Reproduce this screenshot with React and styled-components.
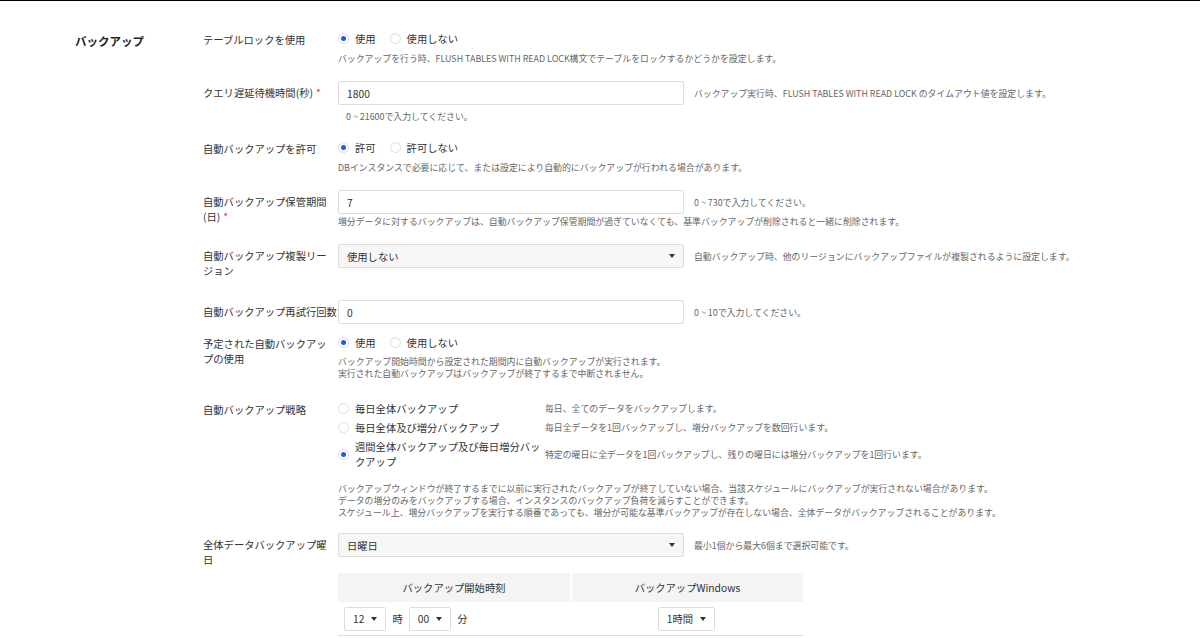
import React from 'react';
import styled, { createGlobalStyle } from 'styled-components';

const Global = createGlobalStyle`
  html, body { margin: 0; background: #fff; }
  body { font-family: "Noto Sans CJK JP", "Noto Sans", sans-serif; color: #333; border-top: 1px solid #000; }
  * { box-sizing: border-box; }
`;

const Page = styled.div`
  display: flex;
  padding: 30px 0 0 75px;
  height: 637px;
  overflow: hidden;
`;

const Title = styled.div`
  width: 128px;
  font-size: 11.5px;
  font-weight: 700;
  color: #222;
  padding-top: 2px;
`;

const Form = styled.div`
  display: flex;
  flex-direction: column;
`;

const Row = styled.div`
  display: flex;
  margin-bottom: ${({ mb }) => mb ?? 16}px;
`;

const Label = styled.div`
  width: 135px;
  font-size: 10.3px;
  line-height: 15px;
  color: #333;
  padding-top: ${({ pt }) => pt ?? 1}px;
  padding-right: 4px;
`;

const NoWrap = styled.span`
  white-space: nowrap;
`;

const Req = styled.span`
  color: #e53935;
  margin-left: 3px;
`;

const Body = styled.div`
  display: flex;
  flex-direction: column;
`;

const Line = styled.div`
  display: flex;
  align-items: ${({ top }) => (top ? 'flex-start' : 'center')};
`;

const Help = styled.div`
  font-size: 8.9px;
  line-height: 12px;
  color: #666;
  margin-top: ${({ mt }) => mt ?? 7}px;
  padding-left: ${({ pl }) => pl ?? 0}px;
`;

const Side = styled.div`
  font-size: 8.9px;
  color: #666;
  margin-left: 10px;
  margin-top: ${({ mt }) => mt ?? 0}px;
  white-space: nowrap;
`;

const Input = styled.div`
  width: 346px;
  height: 24px;
  border: 1px solid #ddd;
  border-radius: 2px;
  font-size: 10.3px;
  padding: 0 8px;
  display: flex;
  align-items: center;
  justify-content: space-between;
  background: ${({ select }) => (select ? '#f7f7f7' : '#fff')};
  color: #333;
`;

const Caret = styled.span`
  width: 0;
  height: 0;
  border-left: 3px solid transparent;
  border-right: 3px solid transparent;
  border-top: 4px solid #333;
  margin-left: 7px;
`;

const RadioGroup = styled.div`
  display: flex;
  gap: 14px;
  align-items: center;
  height: 15px;
`;

const RadioItem = styled.label`
  display: flex;
  align-items: center;
  gap: 6px;
  font-size: 10.3px;
  color: #333;
`;

const Dot = styled.span`
  width: 11px;
  height: 11px;
  border-radius: 50%;
  border: 1px solid #ddd;
  display: inline-flex;
  align-items: center;
  justify-content: center;
  flex: none;
  &::after {
    content: '';
    width: 5px;
    height: 5px;
    border-radius: 50%;
    background: ${({ on }) => (on ? '#1a5fe0' : 'transparent')};
  }
`;

const Radio = ({ on, children }) => (
  <RadioItem>
    <Dot on={on} />
    {children}
  </RadioItem>
);

const StrategyGrid = styled.div`
  display: grid;
  grid-template-columns: 207px auto;
  row-gap: 4px;
  align-items: center;
`;

const StratText = styled.span`
  line-height: 15px;
  width: 190px;
`;

const StratDesc = styled.span`
  font-size: 8.9px;
  color: #666;
`;

const Table = styled.div`
  width: 465px;
  margin-top: 16px;
  display: grid;
  grid-template-columns: 232px 233px;
  font-size: 10.3px;
`;

const Th = styled.div`
  background: #f4f4f4;
  height: 29px;
  display: flex;
  align-items: center;
  justify-content: center;
  color: #333;
  border-left: ${({ sep }) => (sep ? '2px solid #fff' : 'none')};
`;

const Td = styled.div`
  height: 34px;
  display: flex;
  align-items: center;
  justify-content: ${({ center }) => (center ? 'center' : 'flex-start')};
  gap: 6px;
  padding-left: ${({ center }) => (center ? 0 : 6)}px;
  border-bottom: 1px solid #ddd;
`;

const Mini = styled.div`
  height: 24px;
  border: 1px solid #ddd;
  border-radius: 2px;
  padding: 0 8px;
  display: flex;
  align-items: center;
  font-size: 10.3px;
  background: #fff;
`;

export default function App() {
  return (
    <>
      <Global />
      <Page>
        <Title>バックアップ</Title>
        <Form>
          <Row>
            <Label>テーブルロックを使用</Label>
            <Body>
              <RadioGroup>
                <Radio on>使用</Radio>
                <Radio>使用しない</Radio>
              </RadioGroup>
              <Help>バックアップを行う時、FLUSH TABLES WITH READ LOCK構文でテーブルをロックするかどうかを設定します。</Help>
            </Body>
          </Row>
          <Row mb={17}>
            <Label pt={4}>クエリ遅延待機時間(秒)<Req>*</Req></Label>
            <Body>
              <Line>
                <Input>1800</Input>
                <Side>バックアップ実行時、FLUSH TABLES WITH READ LOCK のタイムアウト値を設定します。</Side>
              </Line>
              <Help mt={6} pl={8}>0 ~ 21600で入力してください。</Help>
            </Body>
          </Row>
          <Row>
            <Label>自動バックアップを許可</Label>
            <Body>
              <RadioGroup>
                <Radio on>許可</Radio>
                <Radio>許可しない</Radio>
              </RadioGroup>
              <Help>DBインスタンスで必要に応じて、または設定により自動的にバックアップが行われる場合があります。</Help>
            </Body>
          </Row>
          <Row>
            <Label pt={4}>自動バックアップ保管期間(日)<Req>*</Req></Label>
            <Body>
              <Line>
                <Input>7</Input>
                <Side>0 ~ 730で入力してください。</Side>
              </Line>
              <Help mt={2}>増分データに対するバックアップは、自動バックアップ保管期間が過ぎていなくても、基準バックアップが削除されると一緒に削除されます。</Help>
            </Body>
          </Row>
          <Row mb={22}>
            <Label pt={4}>自動バックアップ複製リージョン</Label>
            <Line top>
              <Input select>使用しない<Caret /></Input>
              <Side mt={6}>自動バックアップ時、他のリージョンにバックアップファイルが複製されるように設定します。</Side>
            </Line>
          </Row>
          <Row mb={11}>
            <Label pt={4}><NoWrap>自動バックアップ再試行回数<Req>*</Req></NoWrap></Label>
            <Line>
              <Input>0</Input>
              <Side>0 ~ 10で入力してください。</Side>
            </Line>
          </Row>
          <Row mb={21}>
            <Label>予定された自動バックアップの使用</Label>
            <Body>
              <RadioGroup>
                <Radio on>使用</Radio>
                <Radio>使用しない</Radio>
              </RadioGroup>
              <Help mt={6}>バックアップ開始時間から設定された期間内に自動バックアップが実行されます。<br />実行された自動バックアップはバックアップが終了するまで中断されません。</Help>
            </Body>
          </Row>
          <Row mb={14}>
            <Label>自動バックアップ戦略</Label>
            <Body>
              <StrategyGrid>
                <RadioItem><Dot /><StratText>毎日全体バックアップ</StratText></RadioItem>
                <StratDesc>毎日、全てのデータをバックアップします。</StratDesc>
                <RadioItem><Dot /><StratText>毎日全体及び増分バックアップ</StratText></RadioItem>
                <StratDesc>毎日全データを1回バックアップし、増分バックアップを数回行います。</StratDesc>
                <RadioItem><Dot on /><StratText>週間全体バックアップ及び毎日増分バックアップ</StratText></RadioItem>
                <StratDesc>特定の曜日に全データを1回バックアップし、残りの曜日には増分バックアップを1回行います。</StratDesc>
              </StrategyGrid>
              <Help mt={14}>バックアップウィンドウが終了するまでに以前に実行されたバックアップが終了していない場合、当該スケジュールにバックアップが実行されない場合があります。<br />データの増分のみをバックアップする場合、インスタンスのバックアップ負荷を減らすことができます。<br />スケジュール上、増分バックアップを実行する順番であっても、増分が可能な基準バックアップが存在しない場合、全体データがバックアップされることがあります。</Help>
            </Body>
          </Row>
          <Row mb={0}>
            <Label pt={4}>全体データバックアップ曜日</Label>
            <Body>
              <Line>
                <Input select>日曜日<Caret /></Input>
                <Side>最小1個から最大6個まで選択可能です。</Side>
              </Line>
              <Table>
                <Th>バックアップ開始時刻</Th>
                <Th sep>バックアップWindows</Th>
                <Td>
                  <Mini>12<Caret /></Mini>
                  <span>時</span>
                  <Mini>00<Caret /></Mini>
                  <span>分</span>
                </Td>
                <Td center>
                  <Mini>1時間<Caret /></Mini>
                </Td>
              </Table>
            </Body>
          </Row>
        </Form>
      </Page>
    </>
  );
}
